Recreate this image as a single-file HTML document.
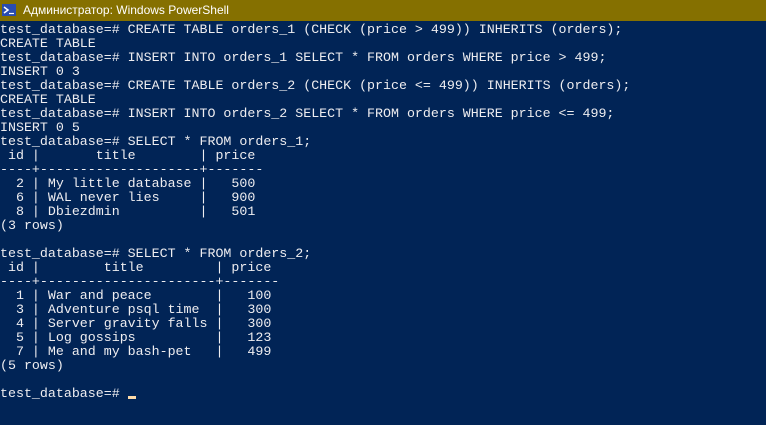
<!DOCTYPE html>
<html><head><meta charset="utf-8"><style>
html,body{margin:0;padding:0;width:766px;height:425px;overflow:hidden;background:#012456;}
#tb{position:absolute;left:0;top:0;width:766px;height:21px;background:#857000;}
#tb span{position:absolute;left:23px;top:3px;font:12px "Liberation Sans",sans-serif;color:#fff;}
#ic{position:absolute;left:2px;top:4px;width:14px;height:12px;background:#2a4cb0;}
pre{position:absolute;left:0;top:23px;margin:0;font-family:"Liberation Mono",monospace;font-size:13.3px;line-height:14px;color:#eeedf0;}
#cur{position:absolute;left:128px;top:396px;width:8px;height:3px;background:#fedba9;}
</style></head><body>
<div id="tb"><div id="ic"><svg width="14" height="12" style="position:absolute;left:0;top:0"><path d="M2 3 L6 6 L2 9" stroke="#fff" stroke-width="1.5" fill="none"/><path d="M7 9.5 H12" stroke="#fff" stroke-width="1.2"/></svg></div><span>Администратор: Windows PowerShell</span></div>
<pre>test_database=# CREATE TABLE orders_1 (CHECK (price &gt; 499)) INHERITS (orders);
CREATE TABLE
test_database=# INSERT INTO orders_1 SELECT * FROM orders WHERE price &gt; 499;
INSERT 0 3
test_database=# CREATE TABLE orders_2 (CHECK (price &lt;= 499)) INHERITS (orders);
CREATE TABLE
test_database=# INSERT INTO orders_2 SELECT * FROM orders WHERE price &lt;= 499;
INSERT 0 5
test_database=# SELECT * FROM orders_1;
 id |       title        | price
----+--------------------+-------
  2 | My little database |   500
  6 | WAL never lies     |   900
  8 | Dbiezdmin          |   501
(3 rows)

test_database=# SELECT * FROM orders_2;
 id |        title         | price
----+----------------------+-------
  1 | War and peace        |   100
  3 | Adventure psql time  |   300
  4 | Server gravity falls |   300
  5 | Log gossips          |   123
  7 | Me and my bash-pet   |   499
(5 rows)

test_database=# </pre>
<div id="cur"></div>
</body></html>
